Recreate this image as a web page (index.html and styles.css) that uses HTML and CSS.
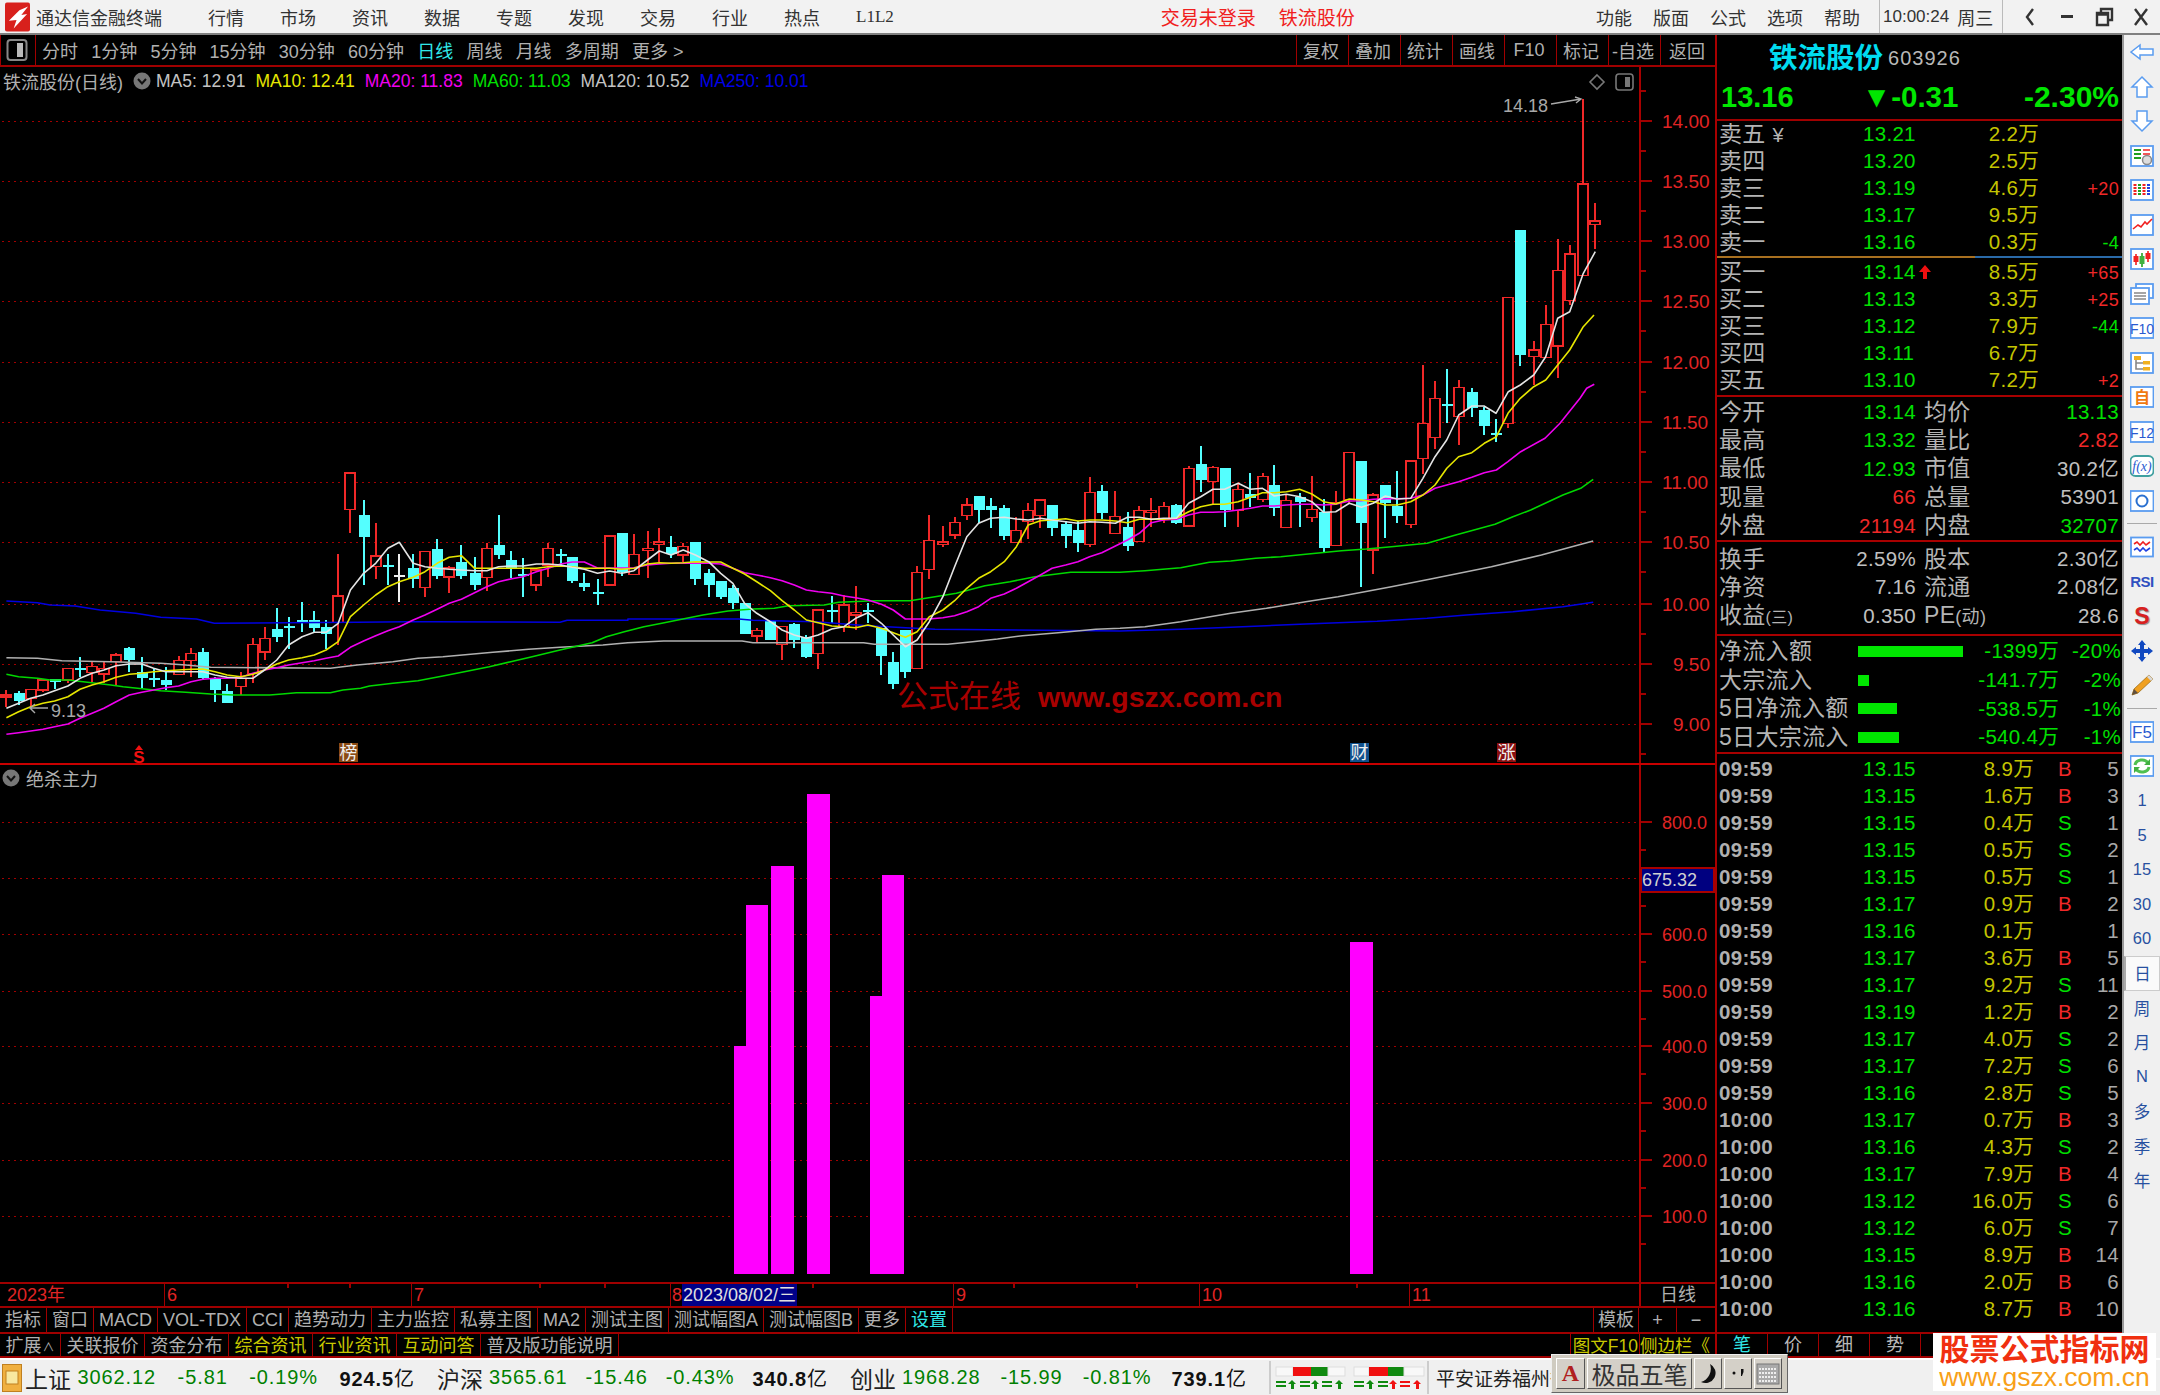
FILE: index.html
```html
<!DOCTYPE html>
<html lang="zh-CN">
<head>
<meta charset="utf-8">
<title>通达信金融终端</title>
<link rel="stylesheet" href="styles.css">
</head>
<body>
<div class="app">
  <header class="titlebar">
    <svg class="logo" viewBox="0 0 26 30"><rect width="26" height="30" rx="2" class="logo-bg"/><path class="logo-mark" d="M4 19 L15 8 L24 4 L17 13 L23 12 L9 27 L12 18 Z"/></svg>
    <span class="app-name">通达信金融终端</span>
    <nav class="menu"><span>行情</span><span>市场</span><span>资讯</span><span>数据</span><span>专题</span><span>发现</span><span>交易</span><span>行业</span><span>热点</span><span class="menu-l2">L1L2</span></nav>
    <span class="notice notice-login">交易未登录</span>
    <span class="notice notice-stock">铁流股份</span>
    <nav class="menu-right"><span>功能</span><span>版面</span><span>公式</span><span>选项</span><span>帮助</span></nav>
    <div class="clock"><span class="clock-time">10:00:24</span><span>周三</span></div>
    <div class="win-controls">
      <svg viewBox="0 0 20 20"><path class="win-line" d="M13 2 L7 10 L13 18"/></svg>
      <svg viewBox="0 0 20 20"><rect class="win-fill" x="4" y="8" width="12" height="3"/></svg>
      <svg viewBox="0 0 20 20"><path class="win-line" d="M7 5 V2 H18 V13 H14 M3 6 H14 V18 H3 Z M3 7.5 H14"/></svg>
      <svg viewBox="0 0 20 20"><path class="win-line" d="M4 2 L16 18 M16 2 L4 18"/></svg>
    </div>
  </header>

  <div class="body-row">
    <main class="left">
      <div class="toolbar">
        <div class="tool-icon"><svg viewBox="0 0 22 24"><rect class="ic-frame-grey" x="1.5" y="2" width="19" height="20" rx="3"/><rect class="ic-white" x="11" y="5" width="6" height="14"/></svg></div>
        <div class="periods"><span>分时</span><span>1分钟</span><span>5分钟</span><span>15分钟</span><span>30分钟</span><span>60分钟</span><span class="is-cyan">日线</span><span>周线</span><span>月线</span><span>多周期</span><span>更多 &gt;</span></div>
        <div class="tool-btns"><span>复权</span><span>叠加</span><span>统计</span><span>画线</span><span>F10</span><span>标记</span><span>-自选</span><span>返回</span></div>
      </div>

      <div class="chart-wrap">
        <svg id="chart" class="chart" width="1715" height="1215" viewBox="0 67 1715 1215"></svg>
        <div class="legend">
          <span class="legend-name">铁流股份(日线)</span>
          <svg class="chev" viewBox="0 0 18 18"><circle cx="9" cy="9" r="8.5" class="chev-bg"/><path d="M5 7 L9 11.5 L13 7" class="chev-line"/></svg>
          <span class="ma5">MA5: 12.91</span><span class="ma10">MA10: 12.41</span><span class="ma20">MA20: 11.83</span><span class="ma60">MA60: 11.03</span><span class="ma120">MA120: 10.52</span><span class="ma250">MA250: 10.01</span>
        </div>
        <div class="legend legend-sub">
          <svg class="chev" viewBox="0 0 18 18"><circle cx="9" cy="9" r="8.5" class="chev-bg"/><path d="M5 7 L9 11.5 L13 7" class="chev-line"/></svg>
          <span class="legend-name">绝杀主力</span>
        </div>
      </div>

      <div class="timeaxis">
        <span class="t-cell t-y">2023年</span><span class="t-cell t-6">6</span><span class="t-cell t-7">7</span><span class="t-cell t-8">8</span><span class="t-date">2023/08/02/三</span><span class="t-gap"></span><span class="t-cell t-9">9</span><span class="t-cell t-10">10</span><span class="t-cell t-11">11</span><span class="t-cell t-name">日线</span>
      </div>

      <div class="indbar">
        <span>指标</span><span>窗口</span><span>MACD</span><span>VOL-TDX</span><span>CCI</span><span>趋势动力</span><span>主力监控</span><span>私募主图</span><span>MA2</span><span>测试主图</span><span>测试幅图A</span><span>测试幅图B</span><span>更多</span><span class="is-cyan">设置</span>
        <span class="ind-right">模板</span><span class="ind-pm">+</span><span class="ind-pm">−</span>
      </div>

      <div class="extbar">
        <span>扩展<small>∧</small></span><span>关联报价</span><span>资金分布</span><span class="is-yellow">综合资讯</span><span class="is-yellow">行业资讯</span><span class="is-yellow">互动问答</span><span>普及版功能说明</span>
        <span class="ext-right is-yellow">图文F10</span><span class="ext-side is-yellow">侧边栏《</span>
      </div>
    </main>

    <aside class="quote">
      <section class="q-head">
        <div class="q-name"><span class="stock-name">铁流股份</span><span class="stock-code">603926</span></div>
        <div class="q-price"><span class="big-price">13.16</span><span class="big-chg">▼-0.31</span><span class="big-pct">-2.30%</span></div>
      </section>

      <section class="q-book">
        <div class="book-row"><span class="lab">卖五<i class="yen">¥</i></span><span class="gr">13.21</span><span class="yl">2.2万</span><span></span></div>
        <div class="book-row"><span class="lab">卖四</span><span class="gr">13.20</span><span class="yl">2.5万</span><span></span></div>
        <div class="book-row"><span class="lab">卖三</span><span class="gr">13.19</span><span class="yl">4.6万</span><span class="rd delta">+20</span></div>
        <div class="book-row"><span class="lab">卖二</span><span class="gr">13.17</span><span class="yl">9.5万</span><span></span></div>
        <div class="book-row"><span class="lab">卖一</span><span class="gr">13.16</span><span class="yl">0.3万</span><span class="gr delta">-4</span></div>
      </section>
      <div class="book-split"><span class="split-a"></span><span class="split-b"></span></div>
      <section class="q-book q-sec">
        <div class="book-row"><span class="lab">买一</span><span class="gr">13.14<svg class="up-arrow" viewBox="0 0 12 14"><path d="M6 0 L12 7 H8 V14 H4 V7 H0 Z"/></svg></span><span class="yl">8.5万</span><span class="rd delta">+65</span></div>
        <div class="book-row"><span class="lab">买二</span><span class="gr">13.13</span><span class="yl">3.3万</span><span class="rd delta">+25</span></div>
        <div class="book-row"><span class="lab">买三</span><span class="gr">13.12</span><span class="yl">7.9万</span><span class="gr delta">-44</span></div>
        <div class="book-row"><span class="lab">买四</span><span class="gr">13.11</span><span class="yl">6.7万</span><span></span></div>
        <div class="book-row"><span class="lab">买五</span><span class="gr">13.10</span><span class="yl">7.2万</span><span class="rd delta">+2</span></div>
      </section>

      <section class="q-stats q-sec">
        <div class="stat-row"><span class="lab">今开</span><span class="gr">13.14</span><span class="lab">均价</span><span class="gr">13.13</span></div>
        <div class="stat-row"><span class="lab">最高</span><span class="gr">13.32</span><span class="lab">量比</span><span class="rd">2.82</span></div>
        <div class="stat-row"><span class="lab">最低</span><span class="gr">12.93</span><span class="lab">市值</span><span class="wh">30.2亿</span></div>
        <div class="stat-row"><span class="lab">现量</span><span class="rd">66</span><span class="lab">总量</span><span class="wh">53901</span></div>
        <div class="stat-row"><span class="lab">外盘</span><span class="rd">21194</span><span class="lab">内盘</span><span class="gr">32707</span></div>
      </section>

      <section class="q-stats q-sec q-fin">
        <div class="stat-row"><span class="lab">换手</span><span class="wh">2.59%</span><span class="lab">股本</span><span class="wh">2.30亿</span></div>
        <div class="stat-row"><span class="lab">净资</span><span class="wh">7.16</span><span class="lab">流通</span><span class="wh">2.08亿</span></div>
        <div class="stat-row"><span class="lab">收益<small>(三)</small></span><span class="wh">0.350</span><span class="lab pe">PE<small>(动)</small></span><span class="wh">28.6</span></div>
      </section>

      <section class="q-flow q-sec">
        <div class="flow-row"><span class="lab">净流入额</span><span class="flow-bar"><i style="width:105px"></i></span><span class="gr">-1399万</span><span class="gr">-20%</span></div>
        <div class="flow-row"><span class="lab">大宗流入</span><span class="flow-bar"><i style="width:11px"></i></span><span class="gr">-141.7万</span><span class="gr">-2%</span></div>
        <div class="flow-row"><span class="lab">5日净流入额</span><span class="flow-bar"><i style="width:39px"></i></span><span class="gr">-538.5万</span><span class="gr">-1%</span></div>
        <div class="flow-row"><span class="lab">5日大宗流入</span><span class="flow-bar"><i style="width:41px"></i></span><span class="gr">-540.4万</span><span class="gr">-1%</span></div>
      </section>

      <section class="q-ticks">
        <div class="tick-row"><span>09:59</span><span class="gr">13.15</span><span class="yl">8.9万</span><span class="rd">B</span><span>5</span></div>
        <div class="tick-row"><span>09:59</span><span class="gr">13.15</span><span class="yl">1.6万</span><span class="rd">B</span><span>3</span></div>
        <div class="tick-row"><span>09:59</span><span class="gr">13.15</span><span class="yl">0.4万</span><span class="gr">S</span><span>1</span></div>
        <div class="tick-row"><span>09:59</span><span class="gr">13.15</span><span class="yl">0.5万</span><span class="gr">S</span><span>2</span></div>
        <div class="tick-row"><span>09:59</span><span class="gr">13.15</span><span class="yl">0.5万</span><span class="gr">S</span><span>1</span></div>
        <div class="tick-row"><span>09:59</span><span class="gr">13.17</span><span class="yl">0.9万</span><span class="rd">B</span><span>2</span></div>
        <div class="tick-row"><span>09:59</span><span class="gr">13.16</span><span class="yl">0.1万</span><span></span><span>1</span></div>
        <div class="tick-row"><span>09:59</span><span class="gr">13.17</span><span class="yl">3.6万</span><span class="rd">B</span><span>5</span></div>
        <div class="tick-row"><span>09:59</span><span class="gr">13.17</span><span class="yl">9.2万</span><span class="gr">S</span><span>11</span></div>
        <div class="tick-row"><span>09:59</span><span class="gr">13.19</span><span class="yl">1.2万</span><span class="rd">B</span><span>2</span></div>
        <div class="tick-row"><span>09:59</span><span class="gr">13.17</span><span class="yl">4.0万</span><span class="gr">S</span><span>2</span></div>
        <div class="tick-row"><span>09:59</span><span class="gr">13.17</span><span class="yl">7.2万</span><span class="gr">S</span><span>6</span></div>
        <div class="tick-row"><span>09:59</span><span class="gr">13.16</span><span class="yl">2.8万</span><span class="gr">S</span><span>5</span></div>
        <div class="tick-row"><span>10:00</span><span class="gr">13.17</span><span class="yl">0.7万</span><span class="rd">B</span><span>3</span></div>
        <div class="tick-row"><span>10:00</span><span class="gr">13.16</span><span class="yl">4.3万</span><span class="gr">S</span><span>2</span></div>
        <div class="tick-row"><span>10:00</span><span class="gr">13.17</span><span class="yl">7.9万</span><span class="rd">B</span><span>4</span></div>
        <div class="tick-row"><span>10:00</span><span class="gr">13.12</span><span class="yl">16.0万</span><span class="gr">S</span><span>6</span></div>
        <div class="tick-row"><span>10:00</span><span class="gr">13.12</span><span class="yl">6.0万</span><span class="gr">S</span><span>7</span></div>
        <div class="tick-row"><span>10:00</span><span class="gr">13.15</span><span class="yl">8.9万</span><span class="rd">B</span><span>14</span></div>
        <div class="tick-row"><span>10:00</span><span class="gr">13.16</span><span class="yl">2.0万</span><span class="rd">B</span><span>6</span></div>
        <div class="tick-row"><span>10:00</span><span class="gr">13.16</span><span class="yl">8.7万</span><span class="rd">B</span><span>10</span></div>
      </section>

      <div class="q-tabs"><span class="is-cyan">笔</span><span>价</span><span>细</span><span>势</span><span></span><span></span><span></span></div>
    </aside>

    <nav class="side">
      <div class="s-item"><svg viewBox="0 0 24 24"><path class="ic-arrow" d="M1 12 L10 5 V9 H23 V15 H10 V19 Z"/></svg></div>
      <div class="s-item"><svg viewBox="0 0 24 24"><path class="ic-arrow" d="M12 2 L22 12 H17 V22 H7 V12 H2 Z"/></svg></div>
      <div class="s-item"><svg viewBox="0 0 24 24"><path class="ic-arrow" d="M12 22 L22 12 H17 V2 H7 V12 H2 Z"/></svg></div>
      <div class="s-item"><svg viewBox="0 0 24 24"><rect class="ic-frame" x="1" y="2" width="22" height="20"/><path class="l-green" d="M4 6 H11 M4 10 H11 M4 14 H11"/><path class="l-red" d="M13 6 H20 M13 10 H20"/><circle class="ic-check" cx="17" cy="16" r="4.5"/></svg></div>
      <div class="s-item"><svg viewBox="0 0 24 24"><rect class="ic-frame" x="1" y="2" width="22" height="20"/><path class="l-red-d" d="M5 6 V18"/><path class="l-green-d" d="M9.5 6 V18"/><path class="l-red-d" d="M14 6 V18"/><path class="l-blue-d" d="M18.5 6 V18"/></svg></div>
      <div class="s-item"><svg viewBox="0 0 24 24"><rect class="ic-frame" x="1" y="2" width="22" height="20"/><path class="l-red" d="M3 16 L8 12 L11 14 L15 9 L17 11 L22 6"/></svg></div>
      <div class="s-item"><svg viewBox="0 0 24 24"><rect class="ic-frame" x="1" y="2" width="22" height="20"/><path class="l-red" d="M6 7 V18 M18 4 V15"/><path class="l-green-k" d="M12 6 V20"/><rect class="f-red" x="3.5" y="9" width="5" height="6"/><rect class="f-green" x="9.5" y="9" width="5" height="8"/><rect class="f-red" x="15.5" y="6" width="5" height="6"/></svg></div>
      <div class="s-item"><svg viewBox="0 0 24 24"><rect class="ic-frame" x="6" y="2" width="17" height="14"/><rect class="ic-frame" x="1" y="6" width="18" height="16"/><path class="l-grey" d="M4 11 H16 M4 14 H16 M4 17 H16"/></svg></div>
      <div class="s-item"><svg viewBox="0 0 24 24"><rect class="ic-frame" x="0.5" y="2" width="23" height="20"/><text class="ic-txt" x="12" y="17.5">F10</text></svg></div>
      <div class="s-item"><svg viewBox="0 0 24 24"><rect class="ic-frame" x="1" y="2" width="22" height="20"/><rect class="f-orange" x="4" y="5" width="7" height="4"/><rect class="f-orange" x="13" y="10" width="7" height="3.5"/><rect class="f-orange" x="13" y="16" width="7" height="3.5"/><path class="l-grey" d="M6 9 V18 H13 M6 12 H13"/></svg></div>
      <div class="s-item"><svg viewBox="0 0 24 24"><rect class="ic-frame" x="0.5" y="2" width="23" height="20"/><text class="ic-txt ic-orange" x="12" y="18">自</text></svg></div>
      <div class="s-item"><svg viewBox="0 0 24 24"><rect class="ic-frame" x="0.5" y="2" width="23" height="20"/><text class="ic-txt" x="12" y="17.5">F12</text></svg></div>
      <div class="s-item"><svg viewBox="0 0 24 24"><rect class="ic-frame-teal" x="0.5" y="2" width="23" height="20" rx="5"/><text class="ic-txt ic-fx" x="12" y="17">f(x)</text></svg></div>
      <div class="s-item"><svg viewBox="0 0 24 24"><rect class="ic-frame" x="0.5" y="2" width="23" height="20"/><circle class="ic-ring" cx="12" cy="12" r="5.5"/></svg></div>
      <div class="s-sep"></div>
      <div class="s-item"><svg viewBox="0 0 24 24"><rect class="ic-frame" x="1" y="2.5" width="22" height="19"/><path class="l-red" d="M4 9 L7 7 L10 10 L13 7 L16 10 L20 7"/><path class="l-blue" d="M4 15 L7 13 L10 16 L13 13 L16 16 L20 13"/></svg></div>
      <div class="s-item"><span class="s-rsi">RSI</span></div>
      <div class="s-item"><span class="s-dollar">S</span></div>
      <div class="s-item"><svg viewBox="0 0 24 24"><path class="f-blue" d="M12 1 L16 6 H14 V10 H18 V8 L23 12 L18 16 V14 H14 V18 H16 L12 23 L8 18 H10 V14 H6 V16 L1 12 L6 8 V10 H10 V6 H8 Z"/></svg></div>
      <div class="s-item"><svg viewBox="0 0 24 24"><path class="f-pencil" d="M19 2 L23 6 L8 20 L2 22 L4 16 Z"/><path class="f-tip" d="M4 16 L8 20 L2 22 Z"/><path class="f-eraser" d="M19 2 L23 6 L21 8 L17 4 Z"/></svg></div>
      <div class="s-sep"></div>
      <div class="s-item"><svg viewBox="0 0 24 24"><rect class="ic-frame" x="0.5" y="2" width="23" height="20"/><text class="ic-txt ic-f5" x="12" y="18">F5</text></svg></div>
      <div class="s-item"><svg viewBox="0 0 24 24"><rect class="ic-frame" x="0.5" y="2" width="23" height="20"/><path class="l-refresh" d="M5 11 A7 6 0 0 1 18 9 M19 13 A7 6 0 0 1 6 15"/><path class="f-green" d="M20 5 V11 H14 Z M4 19 V13 H10 Z"/></svg></div>
      <div class="s-item s-text">1</div>
      <div class="s-item s-text">5</div>
      <div class="s-item s-text">15</div>
      <div class="s-item s-text">30</div>
      <div class="s-item s-text">60</div>
      <div class="s-item s-text s-on">日</div>
      <div class="s-item s-text">周</div>
      <div class="s-item s-text">月</div>
      <div class="s-item s-text">N</div>
      <div class="s-item s-text">多</div>
      <div class="s-item s-text">季</div>
      <div class="s-item s-text">年</div>
    </nav>
  </div>

  <footer class="status">
    <svg class="st-icon" viewBox="0 0 20 28"><rect class="st-icon-bg" x="0.5" y="0.5" width="19" height="27"/><rect class="st-icon-in" x="4" y="7" width="12" height="13"/></svg>
    <div class="idx"><span class="idx-name">上证</span><span class="idx-g">3062.12</span><span class="idx-g">-5.81</span><span class="idx-g">-0.19%</span><span class="idx-a"><b>924.5</b>亿</span></div>
    <div class="idx idx-tight"><span class="idx-name">沪深</span><span class="idx-g">3565.61</span><span class="idx-g">-15.46</span><span class="idx-g">-0.43%</span><span class="idx-a"><b>340.8</b>亿</span></div>
    <div class="idx idx-mid"><span class="idx-name">创业</span><span class="idx-g">1968.28</span><span class="idx-g">-15.99</span><span class="idx-g">-0.81%</span><span class="idx-a"><b>739.1</b>亿</span></div>
    <div class="st-bars">
      <svg viewBox="0 0 75 24" width="75" height="24"><rect class="b-box" x="2" y="1" width="17" height="9"/><rect class="b-red" x="19" y="1" width="18" height="9"/><rect class="b-green" x="37" y="1" width="17" height="9"/><rect class="b-box" x="54" y="1" width="17" height="9"/><path class="f-dgreen" d="M2 15 H12 V17 H2 Z M2 19 H12 V21 H2 Z M18 14 L22 18 H20 V23 H17 V18 H14 Z M26 15 H36 V17 H26 Z M26 19 H36 V21 H26 Z M41 14 L45 18 H43 V23 H40 V18 H37 Z M48 15 H58 V17 H48 Z M48 19 H58 V21 H48 Z M65 14 L69 18 H67 V23 H64 V18 H61 Z"/></svg>
      <svg viewBox="0 0 75 24" width="75" height="24"><rect class="b-box" x="2" y="1" width="15" height="9"/><rect class="b-red" x="17" y="1" width="19" height="9"/><rect class="b-green" x="36" y="1" width="16" height="9"/><rect class="b-box" x="52" y="1" width="20" height="9"/><path class="f-dgreen" d="M2 15 H12 V17 H2 Z M2 19 H12 V21 H2 Z M18 14 L22 18 H20 V23 H17 V18 H14 Z M26 15 H36 V17 H26 Z M26 19 H36 V21 H26 Z"/><path class="f-bright" d="M41 14 L45 18 H43 V23 H40 V18 H37 Z M48 15 H58 V17 H48 Z M48 19 H58 V21 H48 Z M65 14 L69 18 H67 V23 H64 V18 H61 Z"/></svg>
    </div>
    <span class="broker">平安证券福州衍</span>
  </footer>

  <div class="ime">
    <span class="ime-btn ime-a">A</span><span class="ime-btn ime-name">极品五笔</span>
    <span class="ime-btn ime-s"><svg viewBox="0 0 20 24" width="20" height="24"><path class="ime-moon" d="M12 2 A10 10 0 1 1 3 20 A14 14 0 0 0 12 2 Z"/></svg></span>
    <span class="ime-btn ime-s"><svg viewBox="0 0 20 24" width="20" height="24"><circle class="ime-moon" cx="6" cy="11" r="1.5"/><path class="ime-moon" d="M13 7 h2.5 v3 l-1.5 4 h-1 z"/></svg></span>
    <span class="ime-btn ime-s"><svg viewBox="0 0 24 24" width="24" height="24"><rect class="ime-key" x="1" y="2" width="22" height="20"/><path class="ime-keys" d="M3 7 H21 M3 11 H21 M3 15 H21 M3 19 H21"/></svg></span>
  </div>

  <div class="brand"><span class="brand-cn">股票公式指标网</span><span class="brand-en">www.gszx.com.cn</span></div>
</div>
<script src="chart.js"></script>
</body>
</html>
```
FILE: styles.css
```css
* { box-sizing: border-box; }
html, body { margin: 0; padding: 0; background: #000; }
body { font-family: "Liberation Sans", "Noto Sans CJK SC", sans-serif; color: #b8b8b8; width: 2160px; height: 1395px; overflow: hidden; }
.app { position: relative; width: 2160px; height: 1395px; display: flex; flex-direction: column; }
.is-cyan { color: #30e8e8; }
.is-yellow { color: #c8c800; }

/* title bar */
.titlebar { height: 35px; flex: none; display: flex; align-items: center; background: #f2f2f2; border-bottom: 2px solid #808080; color: #333; font-size: 18px; padding-left: 5px; }
.logo { width: 25px; height: 30px; flex: none; }
.logo-bg { fill: #d8201c; }
.logo-mark { fill: #fff; }
.app-name { margin-left: 6px; width: 126px; flex: none; white-space: nowrap; }
.menu { display: flex; align-items: center; gap: 36px; margin-left: 46px; flex: none; }
.menu-l2 { font-size: 17px; font-family: "Liberation Serif", serif; }
.notice { color: #f02020; font-size: 19px; flex: none; }
.notice-login { margin-left: 267px; }
.notice-stock { margin-left: 23px; }
.menu-right { display: flex; gap: 21px; margin-left: auto; margin-right: 19px; flex: none; }
.clock { width: 124px; height: 33px; flex: none; display: flex; align-items: center; gap: 8px; padding-left: 3px; border-left: 1px solid #bbb; border-right: 1px solid #bbb; }
.clock-time { font-size: 17px; }
.win-controls { width: 157px; flex: none; display: flex; padding-left: 17px; gap: 17px; }
.win-controls svg { width: 20px; height: 20px; flex: none; }
.win-line { fill: none; stroke: #333; stroke-width: 2.4; }
.win-fill { fill: #333; }

/* main layout */
.body-row { flex: none; height: 1323px; display: flex; }
.left { width: 1715px; flex: none; display: flex; flex-direction: column; }

.toolbar { height: 32px; flex: none; display: flex; align-items: center; border-bottom: 2px solid #a00000; font-size: 18px; color: #b0b0b0; white-space: nowrap; }
.tool-icon { width: 36px; height: 30px; flex: none; border-left: 1px solid #a00000; border-right: 1px solid #a00000; padding: 3px 0 0 5px; }
.tool-icon svg { width: 22px; height: 24px; display: block; }
.ic-frame-grey { fill: none; stroke: #888; stroke-width: 2; }
.ic-white { fill: #bbb; }
.periods { display: flex; gap: 13.2px; margin-left: 6px; flex: none; }
.tool-btns { margin-left: auto; display: flex; height: 30px; flex: none; }
.tool-btns span { width: 52px; border-left: 1px solid #a00000; display: flex; align-items: center; justify-content: center; padding-right: 3px; }
.tool-btns span:last-child { width: 55px; padding-right: 2px; }

.chart-wrap { position: relative; height: 1215px; flex: none; }
.chart { display: block; overflow: visible; }
.legend { position: absolute; left: 3px; top: 1px; height: 26px; display: flex; align-items: center; font-size: 17.5px; white-space: nowrap; gap: 10px; }
.legend-sub { top: 698px; left: 2px; gap: 6px; }
.legend-name { color: #b0b0b0; font-size: 18px; }
.chev { width: 18px; height: 18px; flex: none; margin-right: -5px; }
.legend-sub .chev { margin-right: 0; }
.chev-bg { fill: #777; }
.chev-line { fill: none; stroke: #111; stroke-width: 2; }
.ma5, .ma120 { color: #c4c4c4; }
.ma10 { color: #e6e600; }
.ma20 { color: #f000f0; }
.ma60 { color: #00e000; }
.ma250 { color: #0000e8; }

/* svg chart items */
.grid { stroke: #a00000; stroke-width: 1; stroke-dasharray: 2 4; shape-rendering: crispEdges; }
.axis { stroke: #a80000; stroke-width: 2; shape-rendering: crispEdges; }
.sep-line { stroke: #c80000; stroke-width: 2; shape-rendering: crispEdges; }
.tick { stroke: #a00000; stroke-width: 1.5; shape-rendering: crispEdges; }
.axis-label { fill: #e02424; font-size: 19px; }
.axis-label-sub { font-size: 18px; }
.wick-u { stroke: #f02828; stroke-width: 1.6; shape-rendering: crispEdges; }
.wick-d { stroke: #54ffff; stroke-width: 1.6; shape-rendering: crispEdges; }
.wick-w { stroke: #f0f0f0; stroke-width: 1.6; shape-rendering: crispEdges; }
.body-u { fill: #000; stroke: #f02828; stroke-width: 1.6; shape-rendering: crispEdges; }
.body-d { fill: #54ffff; shape-rendering: crispEdges; }
.body-w { fill: #f0f0f0; shape-rendering: crispEdges; }
.ma { fill: none; stroke-width: 1.6; stroke-linejoin: round; }
.ma-5 { stroke: #e4e4e4; }
.ma-10 { stroke: #e6e600; }
.ma-20 { stroke: #f000f0; }
.ma-60 { stroke: #00d800; }
.ma-120 { stroke: #b0b0b0; }
.ma-250 { stroke: #0000e0; }
.bar { fill: #ff00ff; shape-rendering: crispEdges; }
.note { fill: #a8a8a8; font-size: 18px; }
.note-line { fill: none; stroke: #a8a8a8; stroke-width: 1.4; }
.ui-line { fill: none; stroke: #777; stroke-width: 1.6; }
.ui-fill { fill: #777; }
.watermark { fill: #a80000; font-size: 31px; }
.watermark-en { font-size: 28.5px; font-weight: 700; }
.flag-text { fill: #f0f0f0; font-size: 18px; text-anchor: middle; }
.flag-brown { fill: #8a4a14; }
.flag-blue { fill: #10508c; }
.flag-red { fill: #8a1010; }
.flag-s { fill: #f01010; font-size: 17px; font-weight: 700; text-anchor: middle; }
.flag-up { fill: #f01010; }
.axis-box { fill: #000080; stroke: #a80000; stroke-width: 2; }
.axis-box-text { fill: #d0d0d0; font-size: 18px; }

/* bottom rows */
.timeaxis { height: 24px; flex: none; display: flex; align-items: center; border-top: 2px solid #a00000; font-size: 18px; color: #e02424; white-space: nowrap; }
.t-cell { height: 22px; line-height: 22px; border-left: 1px solid #a00000; padding-left: 2px; flex: none; }
.t-y { width: 164px; border-left: 0; padding-left: 7px; }
.t-6 { width: 247px; }
.t-7 { width: 259px; }
.t-8 { width: 12px; padding-left: 1px; }
.t-date { width: 115px; height: 22px; line-height: 22px; background: #000088; color: #e0e0e0; text-align: center; flex: none; }
.t-gap { width: 156px; flex: none; }
.t-9 { width: 246px; }
.t-10 { width: 210px; }
.t-11 { width: 230px; }
.t-name { width: 76px; color: #b0b0b0; text-align: center; border-left: 2px solid #a80000; padding-left: 0; }

.indbar, .extbar { flex: none; display: flex; border-top: 2px solid #a00000; font-size: 18px; color: #b0b0b0; white-space: nowrap; }
.indbar { height: 26px; }
.extbar { height: 26px; border-bottom: 2px solid #a00000; }
.indbar span { padding: 0 5px; border-right: 1px solid #a00000; line-height: 24px; flex: none; }
.extbar span { padding: 0 5.5px; border-right: 1px solid #a00000; line-height: 25px; flex: none; }
.extbar small { font-size: 12px; margin-left: 1px; }
.indbar .ind-right { margin-left: auto; border-left: 1px solid #a00000; padding: 0 4px; }
.indbar .ind-pm { width: 38px; text-align: center; padding: 0; }
.indbar .ind-pm:last-child { border-right: 0; }
.extbar .ext-right { margin-left: auto; border-left: 1px solid #a00000; padding: 0 1px 0 2px; font-size: 17.5px; }
.extbar .ext-side { border-right: 0; padding: 0 5px 0 0; font-size: 17.5px; }

/* quote panel */
.quote { width: 407px; flex: none; display: flex; flex-direction: column; border-left: 2px solid #a80000; padding-left: 0; }
.q-head { height: 86px; flex: none; border-bottom: 2px solid #a00000; }
.q-name { height: 40px; display: flex; align-items: center; padding-left: 52px; gap: 5px; }
.stock-name { color: #00dcf0; font-size: 28.5px; font-weight: 700; }
.stock-code { font-size: 20px; margin-top: 6px; letter-spacing: 1px; }
.q-price { display: flex; align-items: center; height: 42px; padding: 2px 3px 0 4px; color: #00e600; font-weight: 700; font-size: 30px; }
.big-price { width: 141px; font-size: 29px; }
.big-chg { font-size: 29.5px; }
.big-pct { margin-left: auto; }

.q-sec { border-bottom: 2px solid #a80000; }
.gr { color: #00e000; }
.rd { color: #f02828; }
.yl { color: #c4c400; }
.wh { color: #c0c0c0; }
.lab { color: #b4b4b4; font-size: 23px; white-space: nowrap; }
.lab small { font-size: 16px; }
.lab.pe small { font-size: 18px; }
.yen { font-style: normal; font-size: 20px; margin-left: 7px; }
.delta { font-size: 18px; }
.book-row, .stat-row, .flow-row, .tick-row { display: grid; font-size: 20.5px; line-height: 1; letter-spacing: 0.3px; white-space: nowrap; padding-left: 2px; align-items: center; }
.q-book { flex: none; }
.book-row { height: 27px; grid-template-columns: 144px 90px 86px 80px; grid-template-rows: 27px; }
.book-row > :nth-child(3), .book-row > :nth-child(4) { text-align: right; }
.book-split { height: 2px; flex: none; display: flex; margin: 0 0 1px; }
.split-a { width: 258px; background: #a87020; }
.split-b { flex: 1; background: #2a6aa8; }
.q-book.q-sec { height: 138px; }
.up-arrow { width: 12px; height: 14px; margin-left: 3px; fill: #f01010; }
.q-stats { flex: none; padding-top: 1px; }
.stat-row { height: 28.4px; grid-template-columns: 100px 97px 66px 137px; grid-template-rows: 28.4px; }
.stat-row > :nth-child(2), .stat-row > :nth-child(4) { text-align: right; }
.stat-row > :nth-child(3) { padding-left: 8px; }
.q-fin { padding-top: 3px; padding-bottom: 4px; }
.flow-row { height: 28.7px; grid-template-columns: 139px 100px 101px 62px; grid-template-rows: 28.7px; }
.flow-row > :nth-child(3), .flow-row > :nth-child(4) { text-align: right; }
.q-flow { flex: none; padding-top: 1px; padding-bottom: 0; }
.flow-bar i { display: block; height: 11px; background: #00e600; }
.q-ticks { flex: none; height: 575px; padding-top: 2px; }
.tick-row { height: 27px; grid-template-columns: 144px 90px 81px 44px 41px; grid-template-rows: 27px; }
.tick-row > :nth-child(1) { font-weight: 700; color: #b0b0b0; }
.tick-row > :nth-child(3), .tick-row > :nth-child(5) { text-align: right; }
.tick-row > :nth-child(4) { padding-left: 24px; }
.tick-row > :nth-child(5) { color: #a8a8a8; }
.q-tabs { height: 26px; flex: none; display: flex; border-top: 2px solid #a00000; border-bottom: 2px solid #a00000; font-size: 18px; margin-top: auto; }
.q-tabs span { width: 51px; border-right: 1px solid #a00000; text-align: center; line-height: 22px; }

/* sidebar */
.side { width: 38px; flex: none; background: #f0f0f0; border-left: 2px solid #999; display: flex; flex-direction: column; padding-top: 0; }
.s-item { height: 34.5px; flex: none; display: flex; align-items: center; justify-content: center; }
.s-item svg { width: 24px; height: 24px; display: block; }
.s-sep { height: 12px; flex: none; position: relative; border-bottom: 0; }
.s-sep::after { content: ""; display: block; height: 1px; margin: 5px 3px 0; background: #aaa; }
.ic-arrow { fill: #fff; stroke: #5a9cf0; stroke-width: 1.5; }
.ic-frame { fill: #fff; stroke: #5a9cf0; stroke-width: 1.8; }
.ic-frame-teal { fill: #fff; stroke: #40a0a0; stroke-width: 1.8; }
.ic-txt { font-size: 14px; fill: #2a5ad0; text-anchor: middle; }
.ic-orange { fill: #f07810; font-size: 16px; font-weight: 700; }
.ic-fx { font-style: italic; font-family: "Liberation Serif", serif; font-size: 14px; }
.ic-f5 { font-size: 17px; }
.ic-ring { fill: none; stroke: #2a70d0; stroke-width: 2; }
.ic-check { fill: #ddd; stroke: #888; stroke-width: 1.5; }
.l-green { stroke: #20a020; stroke-width: 2; fill: none; }
.l-red { stroke: #f02020; stroke-width: 1.6; fill: none; }
.l-blue { stroke: #2040e0; stroke-width: 1.6; fill: none; }
.l-grey { stroke: #888; stroke-width: 1.6; fill: none; }
.l-red-d { stroke: #f02020; stroke-width: 3; stroke-dasharray: 2 1; }
.l-green-d { stroke: #20a020; stroke-width: 3; stroke-dasharray: 2 1; }
.l-blue-d { stroke: #2040e0; stroke-width: 3; stroke-dasharray: 2 1; }
.l-green-k { stroke: #20a020; stroke-width: 1.6; }
.l-refresh { stroke: #50c050; stroke-width: 3; fill: none; }
.f-red { fill: #f02020; }
.f-green { fill: #40b040; }
.f-orange { fill: #f0b020; }
.f-blue { fill: #1048c0; }
.f-pencil { fill: #f0a020; stroke: #a07018; stroke-width: 0.8; }
.f-tip { fill: #605040; }
.f-eraser { fill: #d8d8d8; }
.s-rsi { font-size: 15px; font-weight: 700; color: #3050c0; letter-spacing: -0.5px; }
.s-dollar { font-size: 23px; font-weight: 700; color: #d82020; text-shadow: 1px 1px 1px #888; }
.s-text { font-size: 16.5px; color: #2850a0; }
.s-on { background: #fafafa; border: 1px solid #ccc; border-left: 2px solid #aaa; margin-left: 0; }

/* status bar */
.status { height: 37px; flex: none; display: flex; align-items: center; background: #f0f0f0; border-top: 2px solid #fff; font-size: 20px; color: #111; white-space: nowrap; padding-left: 2px; }
.st-icon { width: 20px; height: 28px; flex: none; }
.st-icon-bg { fill: #f0b040; stroke: #c08020; }
.st-icon-in { fill: #f8e8a0; stroke: #c08020; }
.idx { display: flex; align-items: center; gap: 21.5px; margin-left: 3px; flex: none; letter-spacing: 0.9px; }
.idx + .idx { margin-left: 22px; }
.idx-tight { gap: 18px; }
.idx-mid { gap: 20px; }
.idx-name { font-size: 23px; color: #222; letter-spacing: 0; margin-right: -15px; }
.idx-tight .idx-name { margin-right: -12px; }
.idx-mid .idx-name { margin-right: -14px; }
.idx-g { color: #008000; }
.idx-a { color: #111; }
.st-bars { display: flex; margin-left: 22px; padding-left: 3px; border-left: 2px solid #ccc; border-right: 2px solid #ccc; height: 33px; align-items: center; flex: none; gap: 3px; }
.b-box { fill: #f8f8f8; stroke: #ddd; }
.b-red { fill: #f01010; }
.b-green { fill: #108a10; }
.f-dgreen { fill: #108a10; }
.f-bright { fill: #f01010; }
.broker { font-size: 19px; color: #222; margin-left: 7px; flex: none; }

.ime { position: absolute; left: 1551px; top: 1354px; width: 237px; height: 39px; display: flex; align-items: center; gap: 2px; padding: 3px 4px; background: #cfcbc0; border: 1px solid #eee; border-right-color: #666; border-bottom-color: #666; z-index: 2; }
.ime-btn { height: 31px; display: flex; align-items: center; justify-content: center; background: #d4d0c8; border: 1px solid #fff; border-right-color: #555; border-bottom-color: #555; flex: none; }
.ime-a { width: 29px; color: #b02020; font-size: 24px; font-weight: 700; font-family: "Liberation Serif", serif; }
.ime-name { width: 105px; font-size: 24px; color: #333; }
.ime-s { width: 28px; }
.ime-moon { fill: #111; }
.ime-key { fill: #aaa; stroke: #777; }
.ime-keys { stroke: #eee; stroke-width: 2; stroke-dasharray: 2 1; }

.brand { position: absolute; left: 1933px; top: 1333px; width: 223px; height: 58px; background: #fff; display: flex; flex-direction: column; align-items: center; z-index: 3; }
.brand-cn { font-size: 30px; line-height: 33px; font-weight: 700; color: #f03010; white-space: nowrap; }
.brand-en { font-size: 26.5px; line-height: 23px; color: #f8a018; white-space: nowrap; }
```
FILE: chart.js
```js
// Renders the K-line chart and the indicator pane from the data below.
// Data is stored per horizontal segment of the chart: each segment has its own
// origin and scale so that values can be read directly from the plot.
(function () {
  var NS = 'http://www.w3.org/2000/svg';
  var svg = document.getElementById('chart');

  function el(name, attrs, text) {
    var n = document.createElementNS(NS, name);
    for (var k in attrs) n.setAttribute(k, attrs[k]);
    if (text !== undefined) n.textContent = text;
    svg.appendChild(n);
    return n;
  }

  var SEG = {
    A: { ox: 0, oy: 440, sx: 2.8, sy: 3 },
    B: { ox: 560, oy: 440, sx: 2.8, sy: 3 },
    C: { ox: 1120, oy: 400, sx: 2.8, sy: 3 },
    D: { ox: 1350, oy: 70, sx: 3, sy: 3 }
  };
  var X = function (s, v) { return SEG[s].ox + v / SEG[s].sx; };
  var Y = function (s, v) { return SEG[s].oy + v / SEG[s].sy; };

  // [x, high, bodyTop, bodyBottom, low, kind]  u = up, d = down, w = flat
  var candles = {
    A: [
      [18,750,765,771,800,'u'],[52,752,760,782,795,'d'],[86,748,748,775,805,'u'],[120,720,720,750,755,'u'],
      [153,716,716,725,748,'d'],[190,685,685,720,730,'u'],[224,652,685,690,710,'d'],[258,665,680,698,725,'u'],
      [291,665,685,702,730,'u'],[325,640,645,665,735,'u'],[362,620,625,660,695,'d'],[397,652,697,715,745,'d'],
      [430,685,715,718,742,'d'],[464,680,720,734,750,'d'],[500,648,662,703,705,'u'],[535,625,640,662,710,'u'],
      [568,625,635,715,720,'d'],[602,712,718,750,787,'d'],[636,733,752,790,790,'d'],[674,695,715,740,765,'u'],
      [708,595,613,700,730,'u'],[741,562,595,636,660,'u'],[775,503,567,592,607,'d'],[808,530,558,561,628,'d'],
      [846,487,541,547,575,'d'],[880,513,541,565,580,'d'],[913,540,560,583,628,'d'],[947,342,468,548,615,'u'],
      [981,99,99,209,278,'u'],[1018,180,225,290,435,'d'],[1052,248,348,380,417,'u'],[1086,342,375,380,435,'d'],
      [1118,342,405,408,485,'w'],[1157,342,383,417,445,'d'],[1190,335,335,443,470,'u'],[1224,296,328,408,417,'d'],
      [1258,378,384,411,458,'u'],[1292,315,365,408,417,'d'],[1329,350,400,435,450,'d'],[1363,310,325,412,452,'u'],
      [1396,225,315,345,358,'d'],[1430,333,360,384,415,'d'],[1464,355,401,404,472,'d'],[1502,388,390,435,452,'u'],
      [1535,308,325,375,412,'u']
    ],
    B: [
      [2,328,342,347,380,'d'],[34,350,350,422,430,'d'],[68,400,428,440,453,'d'],[105,418,455,458,494,'d'],
      [139,288,288,435,435,'u'],[173,278,278,395,408,'d'],[207,283,343,403,403,'u'],[245,273,325,331,413,'u'],
      [278,265,306,313,365,'u'],[311,288,320,343,355,'d'],[345,310,320,345,365,'u'],[379,305,305,416,435,'d'],
      [416,388,400,435,472,'d'],[450,422,422,472,476,'d'],[484,435,445,490,507,'d'],[517,490,490,583,583,'d'],
      [551,565,572,588,608,'u'],[589,540,543,601,601,'d'],[622,560,560,613,660,'u'],[656,548,553,600,625,'d'],
      [690,585,592,652,655,'d'],[723,510,510,640,687,'u'],[761,468,510,515,550,'d'],[795,465,495,560,575,'u'],
      [828,437,518,525,570,'u'],[862,490,509,513,550,'d'],[900,563,563,647,706,'d'],[933,635,666,733,747,'d'],
      [967,570,570,695,715,'d'],[1000,378,397,686,686,'u'],[1034,225,302,388,418,'u'],[1072,257,306,314,322,'u'],
      [1105,230,248,285,296,'u'],[1139,175,195,227,241,'u'],[1172,167,167,210,250,'d'],[1206,175,198,210,264,'d'],
      [1244,195,203,287,300,'d'],[1278,230,272,308,310,'u'],[1311,190,212,245,296,'u'],[1345,180,180,227,264,'u'],
      [1378,194,194,264,287,'d'],[1416,243,252,287,323,'d'],[1450,243,270,309,336,'d'],[1483,112,157,313,320,'u'],
      [1517,135,152,219,238,'d'],[1555,152,230,281,281,'u']
    ],
    C: [
      [21,335,380,438,452,'d'],[54,318,332,425,425,'u'],[88,295,332,338,382,'u'],[122,305,320,355,368,'u'],
      [158,313,316,370,372,'d'],[192,197,205,378,378,'u'],[226,137,192,240,276,'d'],[260,197,202,244,315,'u'],
      [293,205,205,330,380,'d'],[331,250,268,332,380,'u'],[365,218,283,293,320,'d'],[399,220,230,298,305,'u'],
      [432,195,255,325,348,'d'],[466,285,302,383,383,'u'],[503,280,292,305,380,'d'],[537,228,328,352,365,'u'],
      [570,298,335,443,458,'d'],[604,272,308,437,437,'u'],[642,157,157,298,310,'u'],[676,182,182,370,560,'d'],
      [709,280,285,450,523,'u'],[743,255,255,310,415,'d'],[776,213,318,348,370,'d'],[814,183,183,373,383,'u']
    ],
    D: [
      [218,885,1060,1165,1212,'u'],[254,933,985,1102,1137,'u'],[290,898,1002,1008,1058,'d'],[326,930,953,1040,1125,'u'],
      [366,953,965,1015,1040,'d'],[402,1010,1020,1067,1095,'d'],[438,1046,1088,1093,1115,'d'],[475,683,683,1060,1075,'u'],
      [511,479,479,856,888,'d'],[551,812,840,860,945,'u'],[587,705,763,863,863,'u'],[623,507,602,828,923,'u'],
      [659,525,552,692,705,'u'],[700,88,342,616,616,'u'],[736,398,453,463,537,'u']
    ]
  };

  // Moving averages: list of [segment, x,y, x,y, ...]
  var mas = {
    'ma-250': [
      ['A',18,483,105,488,140,495,210,498,280,510,380,520,450,532,550,537,600,550,1000,547,1140,545,1210,545,1568,547],
      ['B',20,541,190,541,190,537,500,537,540,541,715,545,860,557,1050,568,1568,573],
      ['C',170,688,310,682,410,677,520,672,720,664,860,655,970,645,1100,635,1240,620,1325,607]
    ],
    'ma-120': [
      ['A',18,653,105,655,173,662,310,665,450,670,520,675,590,682,925,685,1000,675,1100,665,1170,655,1240,650,1380,637,1480,628,1568,622],
      ['B',120,615,190,608,290,603,510,603,540,608,850,608,880,613,1085,613,1155,605,1225,597,1295,587,1395,578,1500,568,1568,565],
      ['C',70,680,170,665,310,640,410,625,520,605,610,590,760,560,870,537,1040,500,1180,465,1325,423]
    ],
    'ma-60': [
      ['A',18,703,52,710,105,715,140,720,190,720,245,727,310,735,345,740,385,745,450,752,520,757,590,762,655,765,755,765,790,762,830,758,925,758,960,750,1010,745,1035,738,1100,730,1170,722,1240,708,1300,695,1370,680,1430,665,1490,650,1568,630],
      ['B',40,620,90,608,130,590,180,575,235,560,285,550,330,540,400,525,470,513,540,507,600,505,640,497,740,495,780,487,880,482,980,482,1050,470,1110,460,1190,437,1260,425,1330,410,1430,397,1568,397],
      ['C',70,512,170,503,250,487,310,483,380,475,450,470,520,463,620,452,690,447,760,440,860,430,940,405,1050,373,1100,350,1150,330,1240,285,1290,265,1325,238]
    ],
    'ma-20': [
      ['A',18,883,52,878,86,873,120,868,153,860,190,852,224,835,258,820,291,805,325,785,362,765,397,757,430,750,464,743,500,738,535,725,568,718,602,715,636,715,674,712,708,700,741,690,775,683,808,675,846,668,880,662,913,655,947,648,981,622,1018,603,1052,587,1086,572,1118,560,1157,540,1190,525,1224,508,1258,490,1292,478,1329,458,1363,440,1396,425,1430,417,1464,410,1502,395,1535,385],
      ['B',2,372,34,366,68,366,105,384,139,384,173,384,207,383,245,375,278,372,311,370,345,370,379,370,416,370,450,372,484,385,517,398,551,405,589,413,622,422,656,435,690,450,723,455,761,460,795,468,828,473,862,480,900,493,933,510,967,537,1000,537,1034,537,1072,533,1105,527,1139,515,1172,500,1206,475,1244,462,1278,445,1311,425,1345,405,1378,385,1416,375,1450,365,1483,350,1517,338,1555,318],
      ['C',21,420,54,400,88,368,122,360,158,358,192,345,226,337,260,337,293,335,331,330,365,325,399,318,432,318,466,315,503,313,537,313,570,315,604,313,642,303,676,302,709,298,743,296,776,296,814,295,848,285,882,265,915,255,948,245,985,232,1020,218,1054,210,1086,185,1122,155,1190,115],
      ['D',630,1060,690,985,710,955,733,943]
    ],
    'ma-10': [
      ['A',18,833,52,815,86,800,120,790,153,783,190,770,224,748,258,735,291,725,325,712,362,703,397,700,430,695,464,692,500,690,535,688,568,687,602,695,636,705,674,710,708,703,741,690,775,672,808,660,846,653,880,645,913,630,947,605,981,530,1018,495,1052,465,1086,440,1118,425,1157,412,1190,395,1224,370,1258,352,1292,347,1329,385,1363,385,1396,385,1430,385,1464,385,1502,385,1535,380],
      ['B',2,378,34,380,68,385,105,385,139,385,173,388,207,385,245,372,278,368,311,370,345,368,379,365,416,366,450,366,484,385,517,402,551,425,589,452,622,482,656,510,690,540,723,548,761,558,795,560,828,563,862,555,900,565,933,578,967,592,1000,575,1034,530,1072,510,1105,482,1139,445,1172,415,1206,395,1244,365,1278,320,1311,255,1345,242,1378,240,1416,236,1450,243,1483,240,1517,240,1555,243],
      ['C',21,368,54,358,88,358,122,358,158,355,192,335,226,320,260,313,293,313,331,305,365,292,399,278,432,278,466,275,503,268,537,282,570,305,604,312,642,297,676,300,709,305,743,315,776,315,814,305,848,285,882,255,915,205,948,170,985,158,1020,130,1054,110],
      ['D',474,1030,511,985,551,950,587,930,623,885,659,840,700,770,732,735]
    ],
    'ma-5': [
      ['A',18,805,52,790,86,775,120,765,153,752,190,738,224,715,258,700,291,690,325,677,362,672,397,672,430,685,464,695,500,695,535,695,568,695,602,705,636,712,674,715,708,715,741,690,775,660,808,615,846,590,880,577,913,577,947,550,981,450,1018,400,1052,370,1086,325,1118,307,1157,370,1190,380,1224,385,1258,388,1292,390,1329,392,1363,392,1396,380,1430,378,1464,378,1502,372,1535,372],
      ['B',2,375,34,382,68,388,105,400,139,393,173,400,207,392,245,360,278,333,311,345,345,330,379,345,416,365,450,400,484,430,517,490,551,520,589,545,622,570,656,585,690,595,723,585,761,567,795,560,828,535,862,518,900,550,933,585,967,620,1000,600,1034,545,1072,470,1105,380,1139,290,1172,250,1206,235,1244,232,1278,237,1311,240,1345,235,1378,240,1416,245,1450,250,1483,245,1517,247,1555,250],
      ['C',21,352,54,352,88,358,122,355,158,355,192,310,226,290,260,268,293,268,331,250,365,268,399,265,432,288,466,283,503,290,537,305,570,337,604,335,642,310,676,322,709,310,743,288,776,297,814,295,848,235,882,170],
      ['D',290,1110,326,1035,366,1008,402,1008,438,1030,475,965,511,945,551,915,587,860,623,745,659,725,700,610,736,545]
    ]
  };

  // Price grid
  var prices = ['14.00','13.50','13.00','12.50','12.00','11.50','11.00','10.50','10.00','9.50','9.00'];
  var priceY = [121,181,241,301,362,422,482,542,604,664,724];
  priceY.forEach(function (y, i) {
    el('line', { class: 'grid', x1: 2, x2: 1640, y1: y, y2: y });
    el('line', { class: 'tick', x1: 1640, x2: 1652, y1: y, y2: y });
    el('line', { class: 'tick', x1: 1640, x2: 1646, y1: y + 30, y2: y + 30 });
    var lx = prices[i].length === 5 ? 1662 : 1673;
    el('text', { class: 'axis-label', x: lx, y: y + 7 }, prices[i]);
  });
  el('line', { class: 'tick', x1: 1640, x2: 1646, y1: 91, y2: 91 });

  // Indicator grid
  var subY = [[822,'800.0'],[878,''],[934,'600.0'],[991,'500.0'],[1046,'400.0'],[1103,'300.0'],[1160,'200.0'],[1216,'100.0']];
  subY.forEach(function (r) {
    el('line', { class: 'grid', x1: 2, x2: 1640, y1: r[0], y2: r[0] });
    el('line', { class: 'tick', x1: 1640, x2: 1652, y1: r[0], y2: r[0] });
    el('line', { class: 'tick', x1: 1640, x2: 1646, y1: r[0] + 28, y2: r[0] + 28 });
    if (r[1]) el('text', { class: 'axis-label axis-label-sub', x: 1662, y: r[0] + 7 }, r[1]);
  });

  // Candles
  Object.keys(candles).forEach(function (s) {
    candles[s].forEach(function (c) {
      var x = Math.round(X(s, c[0])), hi = Y(s, c[1]), top = Y(s, c[2]), bot = Y(s, c[3]), lo = Y(s, c[4]), k = c[5];
      el('line', { class: 'wick-' + k, x1: x, x2: x, y1: hi, y2: top });
      el('line', { class: 'wick-' + k, x1: x, x2: x, y1: bot, y2: lo });
      if (k === 'u') {
        el('rect', { class: 'body-u', x: x - 5, y: top, width: 10, height: Math.max(bot - top, 2) });
      } else {
        el('rect', { class: 'body-' + k, x: x - 5.5, y: top, width: 11, height: Math.max(bot - top, 2) });
      }
    });
  });

  // Moving average lines
  Object.keys(mas).forEach(function (name) {
    var pts = [];
    mas[name].forEach(function (seg) {
      for (var i = 1; i < seg.length; i += 2) {
        pts.push(X(seg[0], seg[i]).toFixed(1) + ',' + Y(seg[0], seg[i + 1]).toFixed(1));
      }
    });
    el('polyline', { class: 'ma ' + name, points: pts.join(' ') });
  });

  // Indicator bars [left, right, top]
  [[734,757,1046],[746,768,905],[771,794,866],[807,830,794],[870,892,996],[882,904,875],[1350,1373,942]].forEach(function (b) {
    el('rect', { class: 'bar', x: b[0], y: b[2], width: b[1] - b[0], height: 1274 - b[2] });
  });

  // Frame
  el('line', { class: 'axis', x1: 1640, x2: 1640, y1: 67, y2: 1282 });
  el('line', { class: 'sep-line', x1: 0, x2: 1715, y1: 764, y2: 764 });

  // Crosshair value on the axis
  el('rect', { class: 'axis-box', x: 1641, y: 868, width: 73, height: 24 });
  el('text', { class: 'axis-box-text', x: 1642, y: 886 }, '675.32');

  // Extreme price notes
  el('text', { class: 'note', x: 1503, y: 112 }, '14.18');
  el('path', { class: 'note-line', d: 'M1551 104 L1581 99 M1575 97 L1581 99 L1576 103' });
  el('text', { class: 'note', x: 51, y: 717 }, '9.13');
  el('path', { class: 'note-line', d: 'M48 708 H30 M35 704 L30 708 L35 713' });

  // Pane widgets
  el('path', { class: 'ui-line', d: 'M1597 75 L1604 82 L1597 89 L1590 82 Z' });
  el('rect', { class: 'ui-line', x: 1616, y: 74, width: 17, height: 16, rx: 3 });
  el('rect', { class: 'ui-fill', x: 1625, y: 77, width: 5, height: 10 });

  // Watermark
  el('text', { class: 'watermark', x: 897, y: 707 }, '公式在线');
  el('text', { class: 'watermark watermark-en', x: 1038, y: 707 }, 'www.gszx.com.cn');

  // Event flags
  el('path', { class: 'flag-up', d: 'M139 745 L143 750 H135 Z' });
  el('text', { class: 'flag-s', x: 139, y: 763 }, 'S');
  [[339,'flag-brown','榜'],[1350,'flag-blue','财'],[1497,'flag-red','涨']].forEach(function (f) {
    el('rect', { class: f[1], x: f[0], y: 743, width: 19, height: 19 });
    el('text', { class: 'flag-text', x: f[0] + 9.5, y: 759 }, f[2]);
  });

  // Time axis ticks
  [288,350,540,605,813,1014,1137,1357].forEach(function (x) {
    el('line', { class: 'tick', x1: x, x2: x, y1: 1283, y2: 1288 });
  });
})();
```
